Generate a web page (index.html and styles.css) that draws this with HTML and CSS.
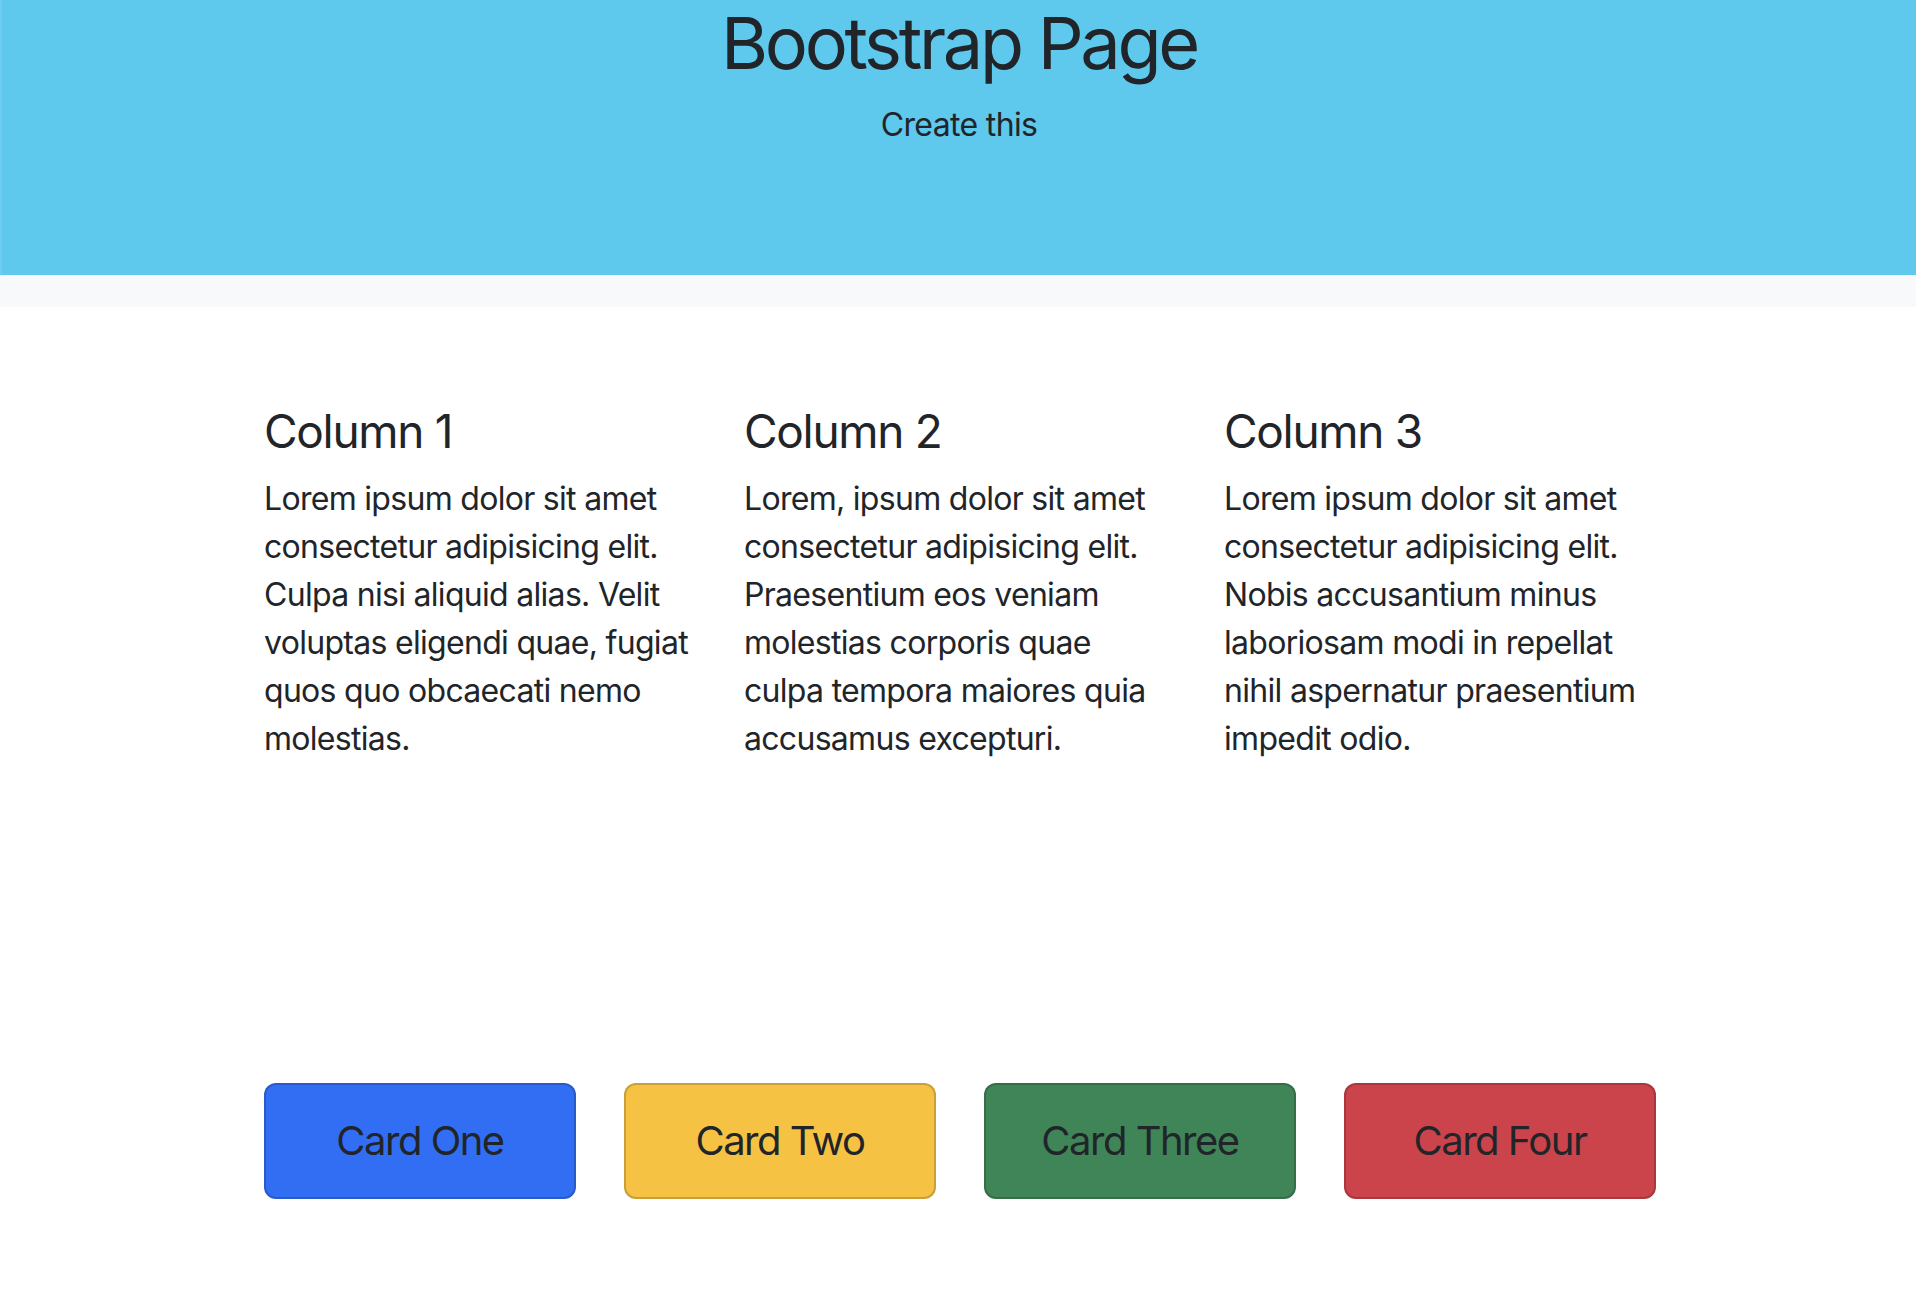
FILE: index.html
```html
<!DOCTYPE html>
<html lang="en">
<head>
<meta charset="utf-8">
<title>Bootstrap Page</title>
<link rel="stylesheet" href="styles.css">
</head>
<body>
<div class="top-wrap">
  <header class="hero">
    <h1 class="hero-title">Bootstrap Page</h1>
    <p class="hero-sub">Create this</p>
  </header>
</div>
<main class="container">
  <section class="cols">
    <div class="col">
      <h4 class="col-title">Column 1</h4>
      <p class="col-text">Lorem ipsum dolor sit amet consectetur adipisicing elit. Culpa nisi aliquid alias. Velit voluptas eligendi quae, fugiat quos quo obcaecati nemo molestias.</p>
    </div>
    <div class="col">
      <h4 class="col-title">Column 2</h4>
      <p class="col-text">Lorem, ipsum dolor sit amet consectetur adipisicing elit. Praesentium eos veniam molestias corporis quae culpa tempora maiores quia accusamus excepturi.</p>
    </div>
    <div class="col">
      <h4 class="col-title">Column 3</h4>
      <p class="col-text">Lorem ipsum dolor sit amet consectetur adipisicing elit. Nobis accusantium minus laboriosam modi in repellat nihil aspernatur praesentium impedit odio.</p>
    </div>
  </section>
  <section class="cards">
    <div class="card card-blue"><h5 class="card-title">Card One</h5></div>
    <div class="card card-yellow"><h5 class="card-title">Card Two</h5></div>
    <div class="card card-green"><h5 class="card-title">Card Three</h5></div>
    <div class="card card-red"><h5 class="card-title">Card Four</h5></div>
  </section>
</main>
</body>
</html>
```

FILE: styles.css
```css
* { box-sizing: border-box; }
html, body { margin: 0; padding: 0; }
body {
  font-family: Inter, "Noto Sans", "Liberation Sans", sans-serif;
  color: #212529;
  background: #ffffff;
  font-size: 32px;
  line-height: 48px;
}
.top-wrap {
  background: #f8f9fa;
  padding-bottom: 32px;
}
.hero {
  background: #5ec8ed;
  border-left: 2px solid #6ccdf0;
  height: 275px;
  text-align: center;
}
.hero-title {
  margin: 0 0 16px;
  font-size: 72px;
  line-height: 85px;
  font-weight: 400;
  letter-spacing: -3.3px;
}
.hero-sub {
  margin: 0;
  font-size: 32px;
  line-height: 48px;
  letter-spacing: -0.65px;
}
.container {
  width: 1392px;
  margin: 0 0 0 calc(50% - 694px);
}
.cols {
  display: grid;
  grid-template-columns: repeat(3, 1fr);
  column-gap: 48px;
  padding-top: 96px;
}
.col-title {
  margin: 0 0 16px;
  font-size: 46px;
  line-height: 56px;
  font-weight: 400;
  letter-spacing: -1.3px;
}
.col-text {
  margin: 0;
  letter-spacing: -0.7px;
}
.cards {
  display: grid;
  grid-template-columns: repeat(4, 1fr);
  column-gap: 48px;
  margin-top: 320px;
}
.card {
  border: 2px solid rgba(0, 0, 0, 0.175);
  border-radius: 12px;
  padding: 32px;
  text-align: center;
}
.card-title {
  margin: 0;
  font-size: 40px;
  line-height: 48px;
  font-weight: 400;
  letter-spacing: -1.5px;
}
.card-blue { background: #326ef4; }
.card-yellow { background: #f6c244; }
.card-green { background: #408558; }
.card-red { background: #cc444b; }
```
